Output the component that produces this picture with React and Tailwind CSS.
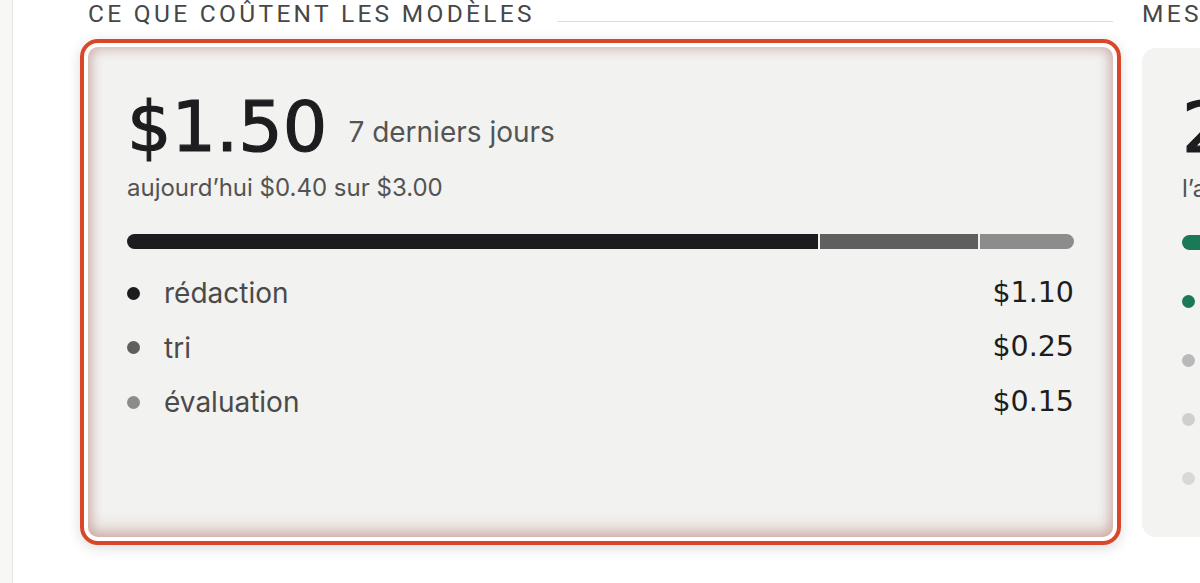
const costs = [
  { label: 'rédaction', value: '$1.10', dot: 'bg-[#1c1c1e]', share: 73.3 },
  { label: 'tri', value: '$0.25', dot: 'bg-[#5f5f5f]', share: 16.7 },
  { label: 'évaluation', value: '$0.15', dot: 'bg-[#8c8c8c]', share: 10 }
]

const dotColors = ['bg-[#1b7a56]', 'bg-[#b9b9b9]', 'bg-[#cfcfcf]', 'bg-[#d8d8d8]']

const SectionTitle = ({ children }) => (
  <div className="flex items-end gap-[22px]">
    <h2 className="whitespace-nowrap font-['Roboto',sans-serif] text-[24.5px] leading-[30px] tracking-[0.135em] text-[#474747]">
      {children}
    </h2>
    <div className="mb-[7px] h-px flex-1 bg-[#dedede]" />
  </div>
)

const App = () => {
  return (
    <div className="flex h-[583px] w-[1200px] overflow-hidden bg-white font-['Inter',sans-serif]">
      <div className="w-[13px] shrink-0 border-r border-[#e6e6e6] bg-[#f7f7f6]" />

      <main className="flex flex-1 gap-[29px] pl-[75px]">
        <section className="w-[1025px] shrink-0">
          <div className="-mt-[1px]">
            <SectionTitle>CE QUE COÛTENT LES MODÈLES</SectionTitle>
          </div>

          <div className="relative mt-[18px]">
            <div className="pointer-events-none absolute -inset-[8px] rounded-[18px] border-4 border-[#d9472b] shadow-[0_3px_14px_rgba(0,0,0,0.14)]" />
            <div className="relative h-[490px] rounded-[10px] bg-[#f2f2f0] px-[39px] pt-[45px] shadow-[inset_0_0_11px_3px_rgba(160,95,85,0.36),inset_0_-10px_16px_rgba(160,95,85,0.2)]">
              <div className="flex items-end gap-[21px]">
                <span className="font-['DejaVu_Sans',sans-serif] text-[70px] leading-none text-[#1d1d1f] [-webkit-text-stroke:1.2px_#1d1d1f]">
                  $1.50
                </span>
                <span className="pb-[16px] text-[28px] leading-[28px] text-[#545454]">
                  7 derniers jours
                </span>
              </div>
              <p className="mt-[12px] text-[24px] leading-[28px] text-[#535353]">
                aujourd’hui $0.40 sur $3.00
              </p>

              <div className="mt-[32px] flex h-[15px] gap-[2px] overflow-hidden rounded-full">
                {costs.map((item) => (
                  <div
                    key={item.label}
                    className={item.dot}
                    style={{ width: `${item.share}%` }}
                  />
                ))}
              </div>

              <ul className="mt-[17px]">
                {costs.map((item) => (
                  <li key={item.label} className="flex h-[54.5px] items-center">
                    <span className={`h-[13px] w-[13px] rounded-full ${item.dot}`} />
                    <span className="ml-[24px] text-[28px] text-[#4a4a4a]">{item.label}</span>
                    <span className="ml-auto font-['DejaVu_Sans',sans-serif] text-[28.5px] text-[#1d1d1f]">
                      {item.value}
                    </span>
                  </li>
                ))}
              </ul>
            </div>
          </div>
        </section>

        <section className="w-[400px] shrink-0">
          <div className="-mt-[1px]">
            <SectionTitle>MESURES DE QUALITÉ</SectionTitle>
          </div>
          <div className="mt-[19px] h-[489px] rounded-[14px] bg-[#f3f3f2] px-[40px] pt-[45px]">
            <div className="font-['DejaVu_Sans',sans-serif] text-[70px] leading-none text-[#1d1d1f] [-webkit-text-stroke:1.2px_#1d1d1f]">
              24
            </div>
            <p className="mt-[12px] text-[24px] leading-[28px] text-[#535353]">l’agent a noté</p>
            <div className="mt-[32px] h-[15px] w-[300px] rounded-full bg-[#1b7a56]" />
            <ul className="mt-[22px]">
              {dotColors.map((dot, i) => (
                <li key={i} className="flex h-[59px] items-center">
                  <span className={`h-[13px] w-[13px] rounded-full ${dot}`} />
                </li>
              ))}
            </ul>
          </div>
        </section>
      </main>
    </div>
  )
}

export default App
